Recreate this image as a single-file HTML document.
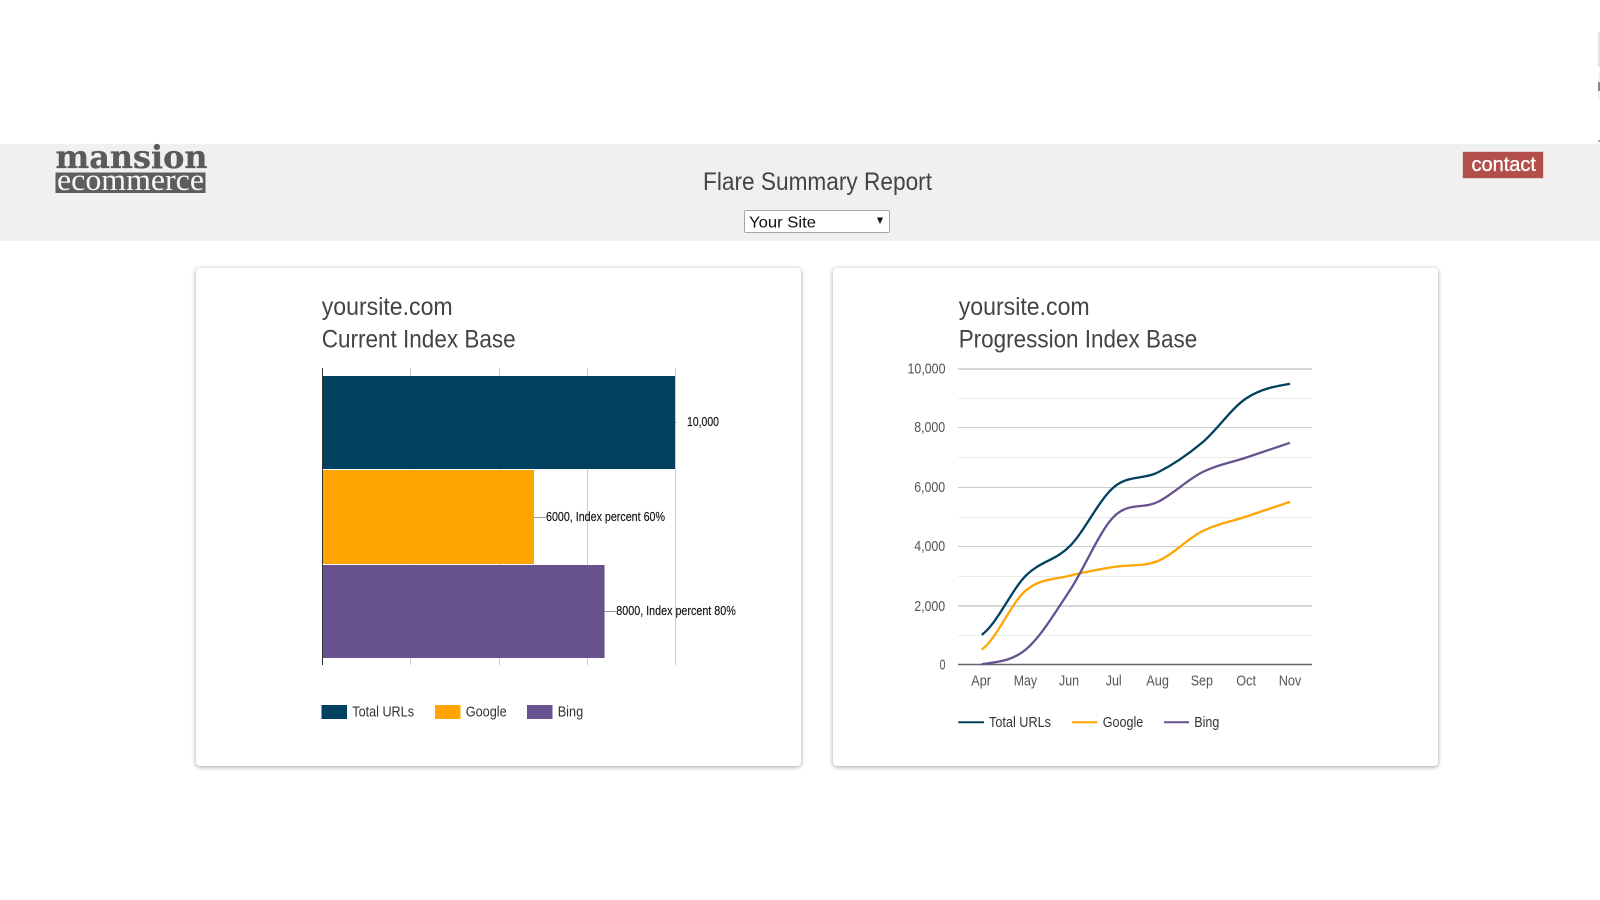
<!DOCTYPE html>
<html lang="en">
<head>
<meta charset="utf-8">
<title>Flare Summary Report</title>
<style>
html,body{margin:0;padding:0;width:1600px;height:900px;overflow:hidden;background:#fff;font-family:"Liberation Sans",Arial,sans-serif}
.hdr{position:absolute;left:0;top:144px;width:1600px;height:97px;background:#f0f0f0}
.card{position:absolute;top:268px;height:498px;background:#fff;border-radius:4px;box-shadow:0 1px 5px rgba(0,0,0,.38);box-sizing:border-box}
.c1{left:196px;width:604.5px}
.c2{left:833px;width:605px}
.sel{position:absolute;left:744px;top:209.5px;width:146px;height:23.5px;box-sizing:border-box;background:#fff;border:1px solid #a6a6a6;border-radius:2px}
.contact{position:absolute;left:1463.3px;top:152px;width:80px;height:26px;background:#b34e4a;box-shadow:0 0 0 .5px #d9b5b3}
.edge{position:absolute;left:1598px;width:2px}
svg.ov{position:absolute;left:0;top:0}
</style>
</head>
<body>
<div class="edge" style="top:32px;height:35px;background:#dfe3ea"></div>
<div class="edge" style="top:72px;height:29px;background:#f3f3f3"></div>
<div class="edge" style="top:82px;height:9px;background:#888"></div>
<div class="edge" style="top:140px;height:2px;background:#aaa"></div>

<div class="hdr"></div>
<div class="card c1"></div>
<div class="card c2"></div>
<div class="sel"></div>
<div class="contact"></div>

<svg class="ov" width="1600" height="900" viewBox="0 0 1600 900" xmlns="http://www.w3.org/2000/svg" font-family="'Liberation Sans',Arial,sans-serif">
  <!-- logo -->
  <g style="filter:blur(.35px)">
    <text x="55.5" y="168" font-family="'DejaVu Serif',serif" font-weight="700" font-size="32" fill="#5a5a5a" stroke="#5a5a5a" stroke-width=".3" textLength="152" lengthAdjust="spacingAndGlyphs">mansion</text>
    <rect x="55.5" y="172.5" width="150" height="20.5" fill="#5e5e5e"/>
    <text x="57" y="190" font-family="'Liberation Serif',serif" font-size="31" fill="#f6f6f6" textLength="147" lengthAdjust="spacingAndGlyphs">ecommerce</text>
  </g>

  <!-- header -->
  <text x="703" y="190" font-size="25" fill="#444" textLength="229" lengthAdjust="spacingAndGlyphs">Flare Summary Report</text>
  <text x="749" y="227.3" font-size="16" fill="#111" textLength="67" lengthAdjust="spacingAndGlyphs">Your Site</text>
  <polygon points="877,217.5 883,217.5 880,224" fill="#111"/>
  <text x="1471.5" y="170.8" font-size="20.5" fill="#fff" stroke="#fff" stroke-width=".35" textLength="64.5" lengthAdjust="spacingAndGlyphs">contact</text>

  <!-- card titles -->
  <g font-size="25" fill="#444">
    <text x="321.7" y="314.8" textLength="131" lengthAdjust="spacingAndGlyphs">yoursite.com</text>
    <text x="321.7" y="347.5" textLength="194" lengthAdjust="spacingAndGlyphs">Current Index Base</text>
    <text x="958.7" y="314.8" textLength="131" lengthAdjust="spacingAndGlyphs">yoursite.com</text>
    <text x="958.7" y="347.5" textLength="238.5" lengthAdjust="spacingAndGlyphs">Progression Index Base</text>
  </g>

  <!-- bar chart -->
  <g stroke="#ccc" stroke-width="1">
    <line x1="410.5" y1="368" x2="410.5" y2="665"/>
    <line x1="499.5" y1="368" x2="499.5" y2="665"/>
    <line x1="587.5" y1="368" x2="587.5" y2="665"/>
    <line x1="675.5" y1="368" x2="675.5" y2="665"/>
  </g>
  <rect x="322.5" y="376" width="352.5" height="93" fill="#01405e"/>
  <rect x="322.5" y="470" width="211.5" height="94" fill="#ffa500"/>
  <rect x="322.5" y="565" width="282" height="93" fill="#67528f"/>
  <line x1="604" y1="565" x2="604" y2="658" stroke="#5a4685" stroke-width="1"/>
  <line x1="322.5" y1="368" x2="322.5" y2="665" stroke="#333" stroke-width="1"/>
  <g stroke="#999" stroke-width="1">
    <line x1="675" y1="422.5" x2="676.5" y2="422.5"/>
    <line x1="534" y1="517.5" x2="546" y2="517.5"/>
    <line x1="605" y1="611.5" x2="616" y2="611.5"/>
  </g>
  <g font-size="12.5" fill="#111" stroke="#111" stroke-width=".15">
    <text x="687" y="426" textLength="32" lengthAdjust="spacingAndGlyphs">10,000</text>
    <text x="546" y="521" textLength="119" lengthAdjust="spacingAndGlyphs">6000, Index percent 60%</text>
    <text x="616.3" y="615" textLength="119.5" lengthAdjust="spacingAndGlyphs">8000, Index percent 80%</text>
  </g>
  <rect x="321.5" y="705" width="25.5" height="14" fill="#01405e"/>
  <rect x="435" y="705" width="25.5" height="14" fill="#ffa500"/>
  <rect x="527" y="705" width="25.5" height="14" fill="#67528f"/>
  <g font-size="15" fill="#333">
    <text x="352.3" y="716.6" textLength="61.7" lengthAdjust="spacingAndGlyphs">Total URLs</text>
    <text x="465.7" y="716.6" textLength="41" lengthAdjust="spacingAndGlyphs">Google</text>
    <text x="557.7" y="716.6" textLength="25.5" lengthAdjust="spacingAndGlyphs">Bing</text>
  </g>

  <!-- line chart grid -->
  <g stroke="#ebebeb" stroke-width="1">
    <line x1="958" y1="398.5" x2="1312" y2="398.5"/>
    <line x1="958" y1="457.5" x2="1312" y2="457.5"/>
    <line x1="958" y1="517.5" x2="1312" y2="517.5"/>
    <line x1="958" y1="576.5" x2="1312" y2="576.5"/>
    <line x1="958" y1="635.5" x2="1312" y2="635.5"/>
  </g>
  <g stroke="#ccc" stroke-width="1">
    <line x1="958" y1="369" x2="1312" y2="369" stroke-width="1.5"/>
    <line x1="958" y1="427.5" x2="1312" y2="427.5"/>
    <line x1="958" y1="487.5" x2="1312" y2="487.5"/>
    <line x1="958" y1="546.5" x2="1312" y2="546.5"/>
    <line x1="958" y1="606" x2="1312" y2="606" stroke-width="1.5"/>
  </g>
  <line x1="958" y1="664.5" x2="1312" y2="664.5" stroke="#666" stroke-width="1.5"/>

  <!-- line chart series -->
  <g fill="none" stroke-width="2.3" stroke-linecap="butt">
    <path stroke="#01405e" d="M981.7 634.8C996.4 625 1011.1 590.5 1025.8 575.7C1040.5 560.9 1055.1 561 1069.8 546.2C1084.5 531.4 1099.2 499.4 1113.9 487.1C1128.6 474.8 1143.2 479.8 1157.9 472.4C1172.6 465 1187.3 455.1 1202 442.8C1216.7 430.5 1231.3 408.3 1246 398.5C1260.7 388.7 1275.3 386.3 1290 383.8"/>
    <path stroke="#ffa500" d="M981.7 649.5C996.4 639.7 1011.1 602.8 1025.8 590.5C1040.5 578.2 1055.1 579.6 1069.8 575.7C1084.5 571.8 1099.2 569.4 1113.9 566.9C1128.6 564.4 1143.2 566.9 1157.9 561C1172.6 555.1 1187.3 538.8 1202 531.4C1216.7 524 1231.3 521.5 1246 516.6C1260.7 511.7 1275.3 506.8 1290 501.9"/>
    <path stroke="#67528f" d="M981.7 664.3C996.4 661.8 1011.1 661.8 1025.8 649.5C1040.5 637.2 1055.1 612.6 1069.8 590.5C1084.5 568.4 1099.2 531.4 1113.9 516.6C1128.6 501.8 1143.2 509.3 1157.9 501.9C1172.6 494.5 1187.3 479.8 1202 472.4C1216.7 465 1231.3 462.5 1246 457.6C1260.7 452.7 1275.3 447.7 1290 442.8"/>
  </g>

  <!-- line chart labels -->
  <g font-size="15" fill="#555">
    <text x="907.5" y="373.3" textLength="38" lengthAdjust="spacingAndGlyphs">10,000</text>
    <text x="914.2" y="432" textLength="31" lengthAdjust="spacingAndGlyphs">8,000</text>
    <text x="914.2" y="492" textLength="31" lengthAdjust="spacingAndGlyphs">6,000</text>
    <text x="914.2" y="551" textLength="31" lengthAdjust="spacingAndGlyphs">4,000</text>
    <text x="914.2" y="611" textLength="31" lengthAdjust="spacingAndGlyphs">2,000</text>
    <text x="939.5" y="669.3" textLength="6" lengthAdjust="spacingAndGlyphs">0</text>
    <text x="971.3" y="685.3" textLength="19.7" lengthAdjust="spacingAndGlyphs">Apr</text>
    <text x="1013.7" y="685.3" textLength="23.3" lengthAdjust="spacingAndGlyphs">May</text>
    <text x="1059" y="685.3" textLength="20" lengthAdjust="spacingAndGlyphs">Jun</text>
    <text x="1105.7" y="685.3" textLength="16" lengthAdjust="spacingAndGlyphs">Jul</text>
    <text x="1146.3" y="685.3" textLength="22.7" lengthAdjust="spacingAndGlyphs">Aug</text>
    <text x="1190.7" y="685.3" textLength="22.3" lengthAdjust="spacingAndGlyphs">Sep</text>
    <text x="1236.3" y="685.3" textLength="19.7" lengthAdjust="spacingAndGlyphs">Oct</text>
    <text x="1278.7" y="685.3" textLength="22.6" lengthAdjust="spacingAndGlyphs">Nov</text>
  </g>

  <!-- line chart legend -->
  <g stroke-width="2">
    <line x1="958.3" y1="722.3" x2="984" y2="722.3" stroke="#01405e"/>
    <line x1="1072" y1="722.3" x2="1097.3" y2="722.3" stroke="#ffa500"/>
    <line x1="1164" y1="722.3" x2="1189" y2="722.3" stroke="#67528f"/>
  </g>
  <g font-size="15" fill="#333">
    <text x="989" y="727.2" textLength="62" lengthAdjust="spacingAndGlyphs">Total URLs</text>
    <text x="1102.7" y="727.2" textLength="40.6" lengthAdjust="spacingAndGlyphs">Google</text>
    <text x="1194.3" y="727.2" textLength="25" lengthAdjust="spacingAndGlyphs">Bing</text>
  </g>
</svg>
</body>
</html>
